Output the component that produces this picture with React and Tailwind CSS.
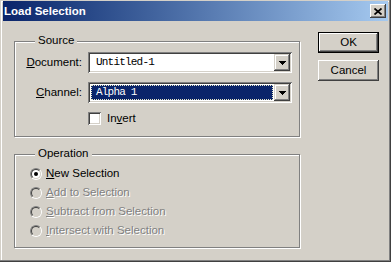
function Combo({ text, selected }) {
  return (
    <div className="ml-[6px] w-[204px] h-[21px] bg-white p-[2px] flex shadow-[inset_1px_1px_0_#808080,inset_-1px_-1px_0_#ffffff,inset_2px_2px_0_#404040,inset_-2px_-2px_0_#d4d0c8]">
      <div className="flex-1 flex p-[1px]">
        {selected ? (
          <div className="flex-1 flex items-center bg-[#0a246a] text-white pl-[5px] outline outline-1 outline-dotted outline-[#e8e8c8] -outline-offset-1 font-['Liberation_Mono',monospace] text-[11px] tracking-[-0.8px]">
            {text}
          </div>
        ) : (
          <div className="flex-1 flex items-center text-black pl-[5px] font-['Liberation_Mono',monospace] text-[11px] tracking-[-0.8px]">
            {text}
          </div>
        )}
      </div>
      <div className="w-[16px] h-[17px] bg-[#d4d0c8] flex items-center justify-center shadow-[inset_-1px_-1px_0_#404040,inset_1px_1px_0_#d4d0c8,inset_-2px_-2px_0_#808080,inset_2px_2px_0_#ffffff]">
        <svg width="7" height="4" viewBox="0 0 7 4" shapeRendering="crispEdges">
          <path d="M0 0H7L3.5 4Z" fill="#000" />
        </svg>
      </div>
    </div>
  );
}

function Radio({ checked, disabled }) {
  return (
    <div className="w-[12px] h-[12px] rounded-full border border-t-[#808080] border-l-[#808080] border-b-white border-r-white flex">
      <div
        className={
          disabled
            ? "flex-1 rounded-full border border-t-[#404040] border-l-[#404040] border-b-[#d4d0c8] border-r-[#d4d0c8] bg-[#d4d0c8] flex items-center justify-center"
            : "flex-1 rounded-full border border-t-[#404040] border-l-[#404040] border-b-[#d4d0c8] border-r-[#d4d0c8] bg-white flex items-center justify-center"
        }
      >
        {checked && <div className="w-[4px] h-[4px] rounded-full bg-black" />}
      </div>
    </div>
  );
}

function RadioRow({ checked, disabled, mn, rest }) {
  return (
    <div className="h-[19px] flex items-center pl-[15px]">
      <Radio checked={checked} disabled={disabled} />
      <span
        className={
          disabled
            ? "ml-[4px] text-[#808080] [text-shadow:1px_1px_0_#ffffff]"
            : "ml-[4px] text-black"
        }
      >
        <u className="underline-offset-[1px]">{mn}</u>
        {rest}
      </span>
    </div>
  );
}

function Button({ children, def }) {
  if (def) {
    return (
      <div className="w-[61px] h-[21px] border border-black bg-[#d4d0c8]">
        <div className="w-full h-full flex items-center justify-center shadow-[inset_-1px_-1px_0_#404040,inset_1px_1px_0_#ffffff,inset_-2px_-2px_0_#808080]">
          {children}
        </div>
      </div>
    );
  }
  return (
    <div className="w-[61px] h-[21px] bg-[#d4d0c8] flex items-center justify-center shadow-[inset_-1px_-1px_0_#404040,inset_1px_1px_0_#ffffff,inset_-2px_-2px_0_#808080]">
      {children}
    </div>
  );
}

export default function App() {
  return (
    <div className="w-[391px] h-[262px] bg-[#d4d0c8] shadow-[inset_-1px_-1px_0_#404040,inset_-2px_-2px_0_#808080,inset_1px_1px_0_#d4d0c8,inset_2px_2px_0_#ffffff] px-[3px] pt-[1px] flex flex-col text-black text-[11.5px] leading-[13px] font-['Liberation_Sans',Arial,sans-serif]">
      <div className="h-[20px] flex items-center justify-between pl-[1px] pr-[2px] bg-linear-to-r from-[#0a246a] to-[#a6caf0]">
        <span className="font-bold text-white text-[11.5px]">Load Selection</span>
        <div className="w-[16px] h-[14px] bg-[#d4d0c8] flex items-center justify-center shadow-[inset_-1px_-1px_0_#404040,inset_1px_1px_0_#ffffff,inset_-2px_-2px_0_#808080]">
          <svg width="8" height="7" viewBox="0 0 8 7">
            <path d="M0.5 0.5L7.5 6.5M7.5 0.5L0.5 6.5" stroke="#000" strokeWidth="1.7" />
          </svg>
        </div>
      </div>
      <div className="flex pl-[11px]">
        <div className="w-[286px] mt-[20px] flex flex-col">
          <div className="relative h-[96px] border border-[#808080] shadow-[inset_1px_1px_0_#ffffff,1px_1px_0_#ffffff] pt-[10px]">
            <div className="absolute left-[20px] -top-[8px] bg-[#d4d0c8] px-[3px]">Source</div>
            <div className="flex items-center h-[21px]">
              <div className="w-[67px] text-right">
                <u className="underline-offset-[1px]">D</u>ocument:
              </div>
              <Combo text="Untitled-1" />
            </div>
            <div className="flex items-center h-[21px] mt-[9px]">
              <div className="w-[67px] text-right">
                <u className="underline-offset-[1px]">C</u>hannel:
              </div>
              <Combo text="Alpha 1" selected />
            </div>
            <div className="flex items-center h-[13px] mt-[9px] pl-[73px]">
              <div className="w-[13px] h-[13px] bg-white shadow-[inset_1px_1px_0_#808080,inset_-1px_-1px_0_#ffffff,inset_2px_2px_0_#404040,inset_-2px_-2px_0_#d4d0c8]" />
              <span className="ml-[6px]">
                In<u className="underline-offset-[1px]">v</u>ert
              </span>
            </div>
          </div>
          <div className="relative mt-[17px] h-[94px] border border-[#808080] shadow-[inset_1px_1px_0_#ffffff,1px_1px_0_#ffffff] pt-[9px]">
            <div className="absolute left-[20px] -top-[8px] bg-[#d4d0c8] px-[3px]">Operation</div>
            <RadioRow checked mn="N" rest="ew Selection" />
            <RadioRow disabled mn="A" rest="dd to Selection" />
            <RadioRow disabled mn="S" rest="ubtract from Selection" />
            <RadioRow disabled mn="I" rest="ntersect with Selection" />
          </div>
        </div>
        <div className="ml-[18px] mt-[11px] flex flex-col gap-[7px]">
          <Button def>OK</Button>
          <Button>Cancel</Button>
        </div>
      </div>
    </div>
  );
}
